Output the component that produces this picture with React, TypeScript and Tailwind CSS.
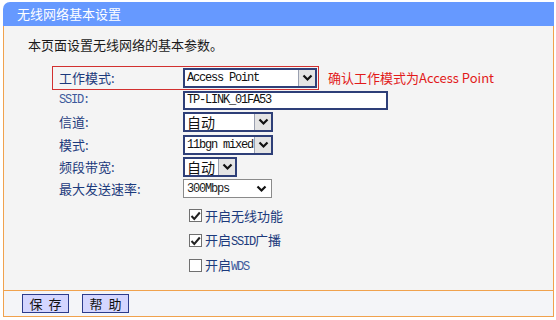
import React from "react";

const cjk = { fontFamily: '"Noto Sans CJK SC", "Noto Sans", sans-serif' };
const mono = { fontFamily: '"Liberation Mono", "Noto Sans CJK SC", monospace' };

function Chevron() {
  return (
    <svg width="11" height="8" viewBox="0 0 11 8">
      <path d="M1.5 1.5 L5.5 5.5 L9.5 1.5" fill="none" stroke="#111" strokeWidth="2.2" />
    </svg>
  );
}

function Select({ w, text, isMono, plain }: { w: number; text: string; isMono?: boolean; plain?: boolean }) {
  if (plain) {
    return (
      <div
        className="flex items-center justify-between h-[19px] bg-white border border-[#8a8a8a] pl-[3px] pr-[4px] text-[#222]"
        style={{ width: w, ...mono }}
      >
        <span className="text-[12px] tracking-[-1.2px]">{text}</span>
        <Chevron />
      </div>
    );
  }
  return (
    <div
      className="flex items-center h-[20px] bg-white border-[2px] border-[#2e3f78] pl-[2px] text-[#111]"
      style={{ width: w }}
    >
      <span
        className={isMono ? "flex-1 text-[12px] tracking-[-1.2px] whitespace-nowrap overflow-hidden" : "flex-1 text-[14px] leading-none"}
        style={isMono ? mono : cjk}
      >
        {text}
      </span>
      <div className="w-[17px] h-[16px] bg-[#e4e4e4] border-l border-[#9aa0b0] flex items-center justify-center">
        <Chevron />
      </div>
    </div>
  );
}

function Label({ children, isMono }: { children: React.ReactNode; isMono?: boolean }) {
  return (
    <div
      className={isMono ? "w-[124px] text-[12px] tracking-[-1.2px] text-[#3d5a9c]" : "w-[124px] text-[13px] text-[#1c3a7c]"}
      style={isMono ? mono : cjk}
    >
      {children}
    </div>
  );
}

function Check({ checked, children }: { checked: boolean; children: React.ReactNode }) {
  return (
    <div className="flex items-center h-[25px] pl-[185px]">
      <div className="w-[13px] h-[13px] bg-white border border-[#707070] flex items-center justify-center">
        {checked && (
          <svg width="11" height="10" viewBox="0 0 11 10">
            <path d="M1.5 5 L4.3 8 L9.8 1.5" fill="none" stroke="#222" strokeWidth="2" />
          </svg>
        )}
      </div>
      <span className="ml-[3px] text-[13px] text-[#1c3a7c]" style={cjk}>
        {children}
      </span>
    </div>
  );
}

export default function App() {
  return (
    <div className="w-[556px] h-[320px] bg-white pt-[2px] pl-[3px]" style={cjk}>
      <div className="w-[551px]">
        <div className="h-[24px] bg-[#6699ff] rounded-tl-[7px] flex items-center pl-[14px] text-white text-[13px]">
          无线网络基本设置
        </div>
        <div className="bg-[#f4f4f4] border-l border-r border-[#f0a24e] h-[264px]">
          <div className="pl-[24px] pt-[9px] h-[40px] text-[13px] text-[#1a1a1a]">本页面设置无线网络的基本参数。</div>
          <div className="pl-[48px]">
            <div className="flex items-center">
              <div className="flex items-center h-[24px] w-[267px] border border-[#d2302f] pl-[6px]">
                <Label>工作模式:</Label>
                <Select w={134} text="Access Point" isMono />
              </div>
              <span className="ml-[9px] text-[13px] text-[#e21a1a]" style={cjk}>
                确认工作模式为Access Point
              </span>
            </div>
            <div className="pl-[7px]">
              <div className="flex items-center h-[20px]">
                <Label isMono>SSID:</Label>
                <div
                  className="h-[19px] w-[205px] bg-white border-[2px] border-[#2e3f78] pl-[2px] flex items-center text-[12px] tracking-[-1.2px] text-[#111]"
                  style={mono}
                >
                  TP-LINK_01FA53
                </div>
              </div>
              <div className="flex items-center h-[23px]">
                <Label>信道:</Label>
                <Select w={90} text="自动" />
              </div>
              <div className="flex items-center h-[23px]">
                <Label>模式:</Label>
                <Select w={90} text="11bgn mixed" isMono />
              </div>
              <div className="flex items-center h-[21px]">
                <Label>频段带宽:</Label>
                <Select w={54} text="自动" />
              </div>
              <div className="flex items-center h-[23px]">
                <Label>最大发送速率:</Label>
                <Select w={89} text="300Mbps" plain />
              </div>
            </div>
          </div>
          <div className="pt-[3px]">
            <Check checked>开启无线功能</Check>
            <Check checked>
              开启<span className="text-[12px] tracking-[-1.2px]" style={mono}>SSID</span>广播
            </Check>
            <Check checked={false}>
              开启<span className="text-[12px] tracking-[-1.2px] text-[#3d5a9c]" style={mono}>WDS</span>
            </Check>
          </div>
        </div>
        <div className="h-[27px] bg-[#f4f5f8] border border-[#f0a24e] flex items-center pl-[18px] gap-[13px]">
          <button className="w-[47px] h-[19px] bg-[#d4d6ff] border border-[#2c3c8c] text-[13px] text-[#111] leading-none tracking-[6px] pl-[6px]" style={cjk}>
            保存
          </button>
          <button className="w-[47px] h-[19px] bg-[#d4d6ff] border border-[#2c3c8c] text-[13px] text-[#111] leading-none tracking-[6px] pl-[6px]" style={cjk}>
            帮助
          </button>
        </div>
      </div>
    </div>
  );
}
